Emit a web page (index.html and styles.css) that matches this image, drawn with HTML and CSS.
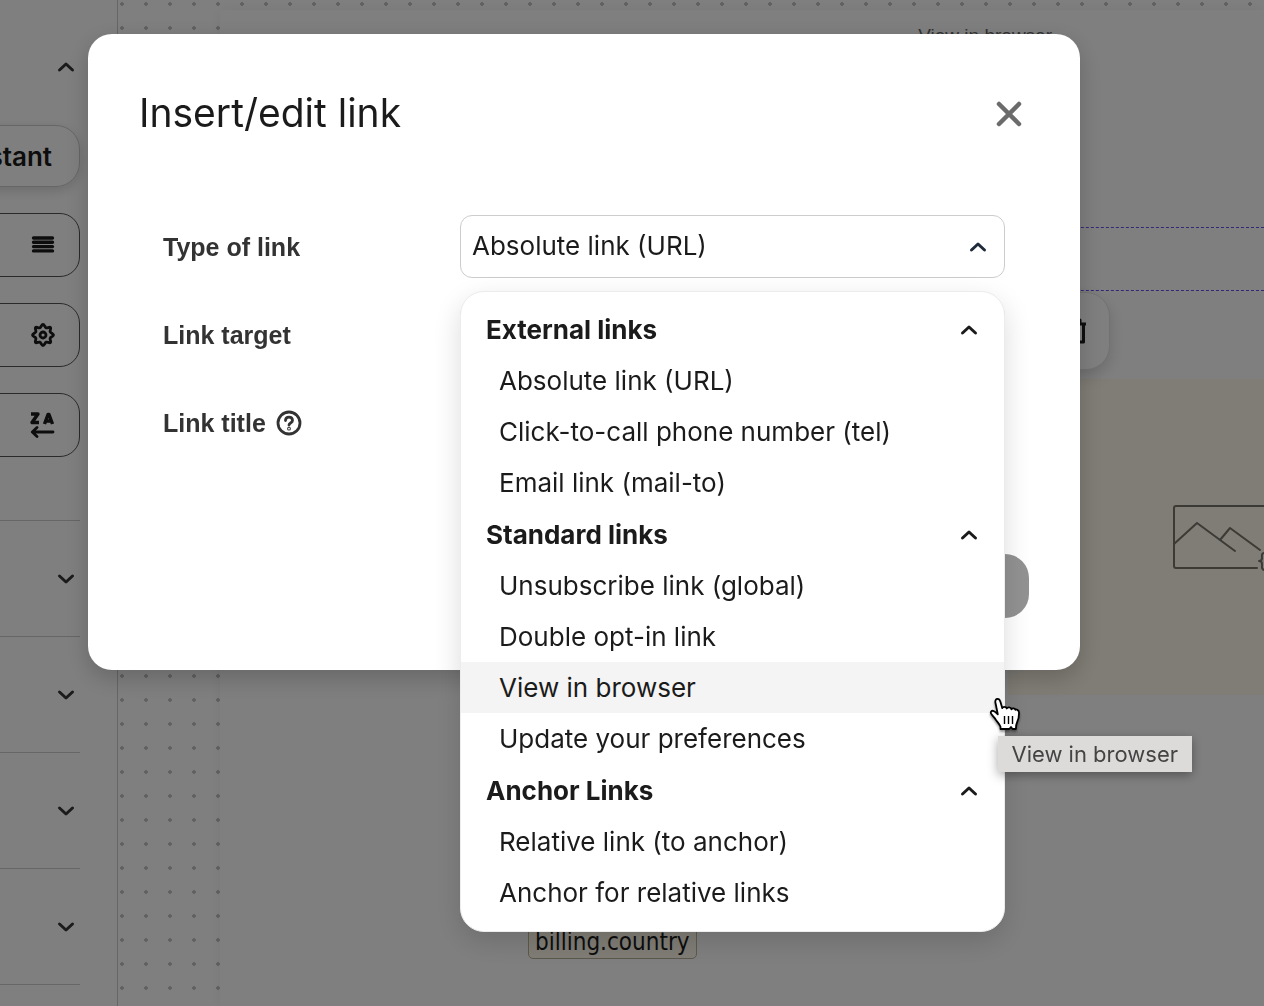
FILE: index.html
```
<!DOCTYPE html>
<html lang="en">
  <head>
    <meta charset="UTF-8" />
    <meta name="viewport" content="width=device-width, initial-scale=1.0" />
    <title>Insert/edit link</title>
    <link rel="stylesheet" href="styles.css">
  </head>
  <body>
    <svg class="sprite" aria-hidden="true">
      <symbol id="chevron" viewBox="0 0 18 12">
        <path d="M2.500 9 9 3l6.500 6" fill="none" stroke="currentColor" stroke-width="3" stroke-linecap="round" stroke-linejoin="round" />
      </symbol>
    </svg>

    <div class="editor">
      <aside class="sidebar">
        <button class="section-toggle" type="button" aria-label="Collapse section">
          <svg class="chevron"><use href="#chevron" /></svg>
        </button>
        <div class="tools">
          <button class="assistant" type="button">Assistant</button>
          <button class="tool" type="button" aria-label="Justify">
            <svg width="24" height="18" viewBox="0 0 24 18" stroke="currentColor" stroke-width="3.400" stroke-linecap="round">
              <path d="M2.500 2h19M2.500 6.300h19M2.500 10.600h19M2.500 14.900h19" />
            </svg>
          </button>
          <button class="tool" type="button" aria-label="Settings">
            <svg width="24" height="24" viewBox="0 0 24 24" fill="none" stroke="currentColor" stroke-width="2.800" stroke-linejoin="round">
              <path d="M12 1.500c1.500 0 1.900 2.900 3.200 3.400s3.300-1.400 4.300-.4-.9 3-.4 4.300 3.400 1.700 3.400 3.200-2.900 1.900-3.400 3.200 1.400 3.300.4 4.300-3-.9-4.300-.4-1.700 3.400-3.200 3.400-1.900-2.900-3.200-3.400-3.300 1.400-4.300.4.900-3 .4-4.300-3.400-1.700-3.400-3.200 2.900-1.900 3.400-3.200-1.400-3.300-.4-4.300 3 .9 4.300.4 1.700-3.400 3.200-3.400z" />
              <circle cx="12" cy="12" r="3" />
            </svg>
          </button>
          <button class="tool" type="button" aria-label="Text direction">
            <svg width="26" height="26" viewBox="0 0 26 26" fill="none" stroke="currentColor" stroke-width="3.400" stroke-linejoin="round">
              <path d="M2 2h7L3 10.500h7M15.500 12 19 2.500h1L23.500 12M17 9h5" />
              <path d="M24 20H3.500M8 15.500 3.300 20 8 24.500" stroke-width="2.800" stroke-linecap="round" />
            </svg>
          </button>
        </div>
        <button class="section" type="button" aria-label="Expand section"><svg class="chevron down"><use href="#chevron" /></svg></button>
        <button class="section" type="button" aria-label="Expand section"><svg class="chevron down"><use href="#chevron" /></svg></button>
        <button class="section" type="button" aria-label="Expand section"><svg class="chevron down"><use href="#chevron" /></svg></button>
        <button class="section" type="button" aria-label="Expand section"><svg class="chevron down"><use href="#chevron" /></svg></button>
        <div class="section-end"></div>
      </aside>

      <main class="canvas">
        <div class="sheet">
          <div class="preheader"><a href="#">View in browser</a></div>
          <div class="selected-row">
            <div class="row-toolbar">
              <button type="button" aria-label="Delete">
                <svg width="22" height="26" viewBox="0 0 22 26" fill="none" stroke="currentColor" stroke-width="3" stroke-linejoin="round">
                  <path d="M1 6h20M7 6V2h8v4M3.500 6v18h15V6" />
                </svg>
              </button>
            </div>
          </div>
          <div class="product">
            <div class="product-image">
              <svg width="120" height="72" viewBox="0 0 120 72" fill="none" stroke="currentColor" stroke-width="2" stroke-linecap="round" stroke-linejoin="round">
                <path d="M84 64H3a2 2 0 0 1-2-2V4a2 2 0 0 1 2-2h114M1 40l23-21 38 28M47 36l10-12 30 22" />
                <path d="M92 49c-4 0-3 3-3 5s-1 3-3 3c2 0 3 1 3 3s-1 6 3 6" />
              </svg>
            </div>
          </div>
          <div class="merge-line"><span class="merge-tag">billing.country</span></div>
        </div>
      </main>
    </div>

    <div class="backdrop">
      <section class="modal" role="dialog" aria-modal="true" aria-labelledby="modal-title">
        <header class="modal-header">
          <h1 id="modal-title">Insert/edit link</h1>
          <button class="close" type="button" aria-label="Close">
            <svg width="26" height="26" viewBox="0 0 26 26" stroke="currentColor" stroke-width="4.500" stroke-linecap="round">
              <path d="M3 3l20 20M23 3 3 23" />
            </svg>
          </button>
        </header>

        <form class="link-form">
          <label for="link-type">Type of link</label>
          <div class="field">
            <select id="link-type">
              <option>Absolute link (URL)</option>
            </select>
            <svg class="chevron field-chevron"><use href="#chevron" /></svg>

            <div class="menu">
              <button class="group" type="button">External links <svg class="chevron"><use href="#chevron" /></svg></button>
              <ul>
                <li><button type="button">Absolute link (URL)</button></li>
                <li><button type="button">Click-to-call phone number (tel)</button></li>
                <li><button type="button">Email link (mail-to)</button></li>
              </ul>
              <button class="group" type="button">Standard links <svg class="chevron"><use href="#chevron" /></svg></button>
              <ul>
                <li><button type="button">Unsubscribe link (global)</button></li>
                <li><button type="button">Double opt-in link</button></li>
                <li class="active">
                  <button type="button">View in browser</button>
                  <svg class="pointer" width="32" height="36" viewBox="0 0 32 36">
                    <path d="M11.500 32v-2.300c-.9-2.500-3.200-4.700-4.700-7-1.200-2-3.800-4.300-4.700-6-.8-1.700.3-3.200 2.100-2.900 1.800.4 3 1.900 4.600 3.500L6.600 6.500C6 4.400 6.300 2.400 8 2c1.800-.4 2.800 1 3.400 2.800l1.900 6.400c.3-1.700 3.800-2 4.500.3.700-1.600 4-1.700 4.600.8.800-1.400 3.400-1.200 4 .5.400-.6 3.500-.2 3.600 2.700.1 4.500-.4 6.800-1.800 9.500-1 2-1.300 4-1.300 7h-3.400l-1.500-2-1.700 2z" fill="#fff" stroke="#000" stroke-width="1.800" stroke-linejoin="round" />
                    <path d="M15.500 19v8M19.500 19v8M23.500 19v8" stroke="#000" stroke-width="1.400" />
                  </svg>
                  <span class="tooltip" role="tooltip">View in browser</span>
                </li>
                <li><button type="button">Update your preferences</button></li>
              </ul>
              <button class="group" type="button">Anchor Links <svg class="chevron"><use href="#chevron" /></svg></button>
              <ul>
                <li><button type="button">Relative link (to anchor)</button></li>
                <li><button type="button">Anchor for relative links</button></li>
              </ul>
            </div>
          </div>

          <label for="link-target">Link target</label>
          <input type="text" id="link-target">

          <label for="link-title">
            Link title
            <svg width="26" height="26" viewBox="0 0 26 26" fill="none" stroke="currentColor" stroke-width="2.800" stroke-linecap="round">
              <circle cx="13" cy="13" r="11" />
              <path d="M9.500 10.500c0-4.500 7-4.500 7 0 0 2.500-3.500 2.500-3.500 4.500" />
              <circle cx="13" cy="18.700" r=".5" />
            </svg>
          </label>
          <input type="text" id="link-title">
        </form>

        <footer class="modal-footer">
          <button class="save" type="button" aria-label="Save" disabled></button>
        </footer>
      </section>
    </div>
  </body>
</html>
```
FILE: styles.css
```
* {
  box-sizing: border-box;
}
body {
  margin: 0;
  height: 100vh;
  overflow: hidden;
  font-family: Inter, "Liberation Sans", sans-serif;
  font-size: 26px;
  color: #1b1b1b;
}
button {
  padding: 0;
  border: 0;
  background: none;
  font: inherit;
  color: inherit;
  cursor: pointer;
}
.sprite {
  display: none;
}
.chevron {
  display: block;
  width: 18px;
  height: 12px;
}
.chevron.down {
  transform: rotate(180deg);
}

/* editor behind the dialog */
.editor {
  display: flex;
  min-height: 100vh;
  background: #fff;
}
.sidebar {
  flex: none;
  display: flex;
  flex-direction: column;
  align-items: flex-end;
  width: 118px;
  padding-right: 37px;
  border-right: 1px solid #ccc;
  overflow: hidden;
}
.section-toggle {
  padding: 61px 5px 52px;
}
.section-toggle,
.section {
  color: #363636;
}
.tools {
  display: flex;
  flex-direction: column;
  align-items: flex-end;
  gap: 26px;
  margin-bottom: 63px;
}
.assistant {
  width: 240px;
  height: 62px;
  padding-right: 27px;
  border: 1px solid #ccc;
  border-radius: 24px;
  box-shadow: 0 4px 12px rgba(0, 0, 0, 0.15);
  font-weight: 600;
  text-align: right;
}
.tool {
  display: flex;
  align-items: center;
  justify-content: flex-end;
  width: 240px;
  height: 64px;
  padding-right: 24px;
  border: 1px solid #555;
  border-radius: 20px;
}
.section,
.section-end {
  flex: none;
  width: 240px;
  border-top: 1px solid #ccc;
}
.section {
  display: flex;
  align-items: center;
  justify-content: flex-end;
  height: 116px;
  padding-right: 5px;
}
.canvas {
  flex: 1;
  padding: 10px 0 0 102px;
  background: radial-gradient(circle, #c4c4c4 2px, transparent 2px) -8px -8px / 24px 24px;
}
.sheet {
  height: 100%;
  background: #fff;
  box-shadow: 0 0 12px rgba(0, 0, 0, 0.06);
}
.preheader {
  height: 217px;
  padding: 14px 212px 0 0;
  font: 19px/24px "Liberation Sans", Arial, sans-serif;
  text-align: right;
}
.preheader a {
  color: #666;
  text-decoration: none;
}
.selected-row {
  position: relative;
  height: 64px;
  border: 1px dashed #6450f0;
  border-width: 1px 0;
}
.row-toolbar {
  position: absolute;
  top: 64px;
  right: 154px;
  display: flex;
  align-items: center;
  justify-content: flex-end;
  width: 200px;
  height: 78px;
  padding-right: 22px;
  border: 1px solid #e4e4e4;
  border-radius: 24px;
  background: #fff;
  box-shadow: 0 6px 16px rgba(0, 0, 0, 0.16);
}
.row-toolbar svg {
  display: block;
}
.product {
  display: flex;
  justify-content: flex-end;
  margin-top: 88px;
}
.product-image {
  width: 256px;
  height: 316px;
  padding: 125px 0 0 165px;
  background: #fffaeb;
  color: #77746b;
  overflow: hidden;
}
.merge-line {
  padding: 230px 0 0 308px;
}
.merge-tag {
  display: inline-block;
  padding: 0 6px;
  border: 1px solid #bab49a;
  border-radius: 5px;
  background: #fffaeb;
  font: 24px/32px "DejaVu Sans Condensed", "Noto Sans", sans-serif;
}

/* dialog */
.backdrop {
  position: fixed;
  inset: 0;
  padding: 34px 184px 0 88px;
  background: rgba(0, 0, 0, 0.5);
}
.modal {
  padding: 52px 51px;
  border-radius: 24px;
  background: #fff;
  box-shadow: 0 8px 24px rgba(0, 0, 0, 0.2);
}
.modal-header {
  display: flex;
  align-items: center;
  justify-content: space-between;
  height: 56px;
  padding-right: 7px;
}
.modal-header h1 {
  margin: 0 0 4px;
  font-size: 39px;
  font-weight: 400;
}
.close {
  display: flex;
  color: #6b6b6b;
}
.link-form {
  display: grid;
  grid-template-columns: 297px 1fr;
  gap: 24px 0;
  padding: 73px 24px 0;
}
.link-form label {
  display: flex;
  align-items: center;
  gap: 10px;
  height: 64px;
  font: bold 25px "Liberation Sans", Arial, sans-serif;
  color: #333;
}
.field {
  position: relative;
}
.link-form select,
.link-form input {
  width: 100%;
  height: 63px;
  padding: 0 11px 2px;
  border: 1px solid #ccc;
  border-radius: 12px;
  background: #fff;
  font: inherit;
  color: inherit;
  appearance: none;
}
.field-chevron {
  position: absolute;
  top: 26px;
  right: 18px;
  color: #1f2a3a;
  pointer-events: none;
}
.modal-footer {
  display: flex;
  justify-content: flex-end;
  margin-top: 99px;
}
.save {
  width: 140px;
  height: 64px;
  border-radius: 24px;
  background: #929292;
}

/* link type menu */
.menu {
  position: absolute;
  top: 76px;
  left: 0;
  right: 0;
  z-index: 1;
  display: flex;
  flex-direction: column;
  gap: 1px;
  padding: 12px 0 13px;
  border: 1px solid #ececec;
  border-radius: 24px;
  background: #fff;
  box-shadow: 0 10px 28px rgba(0, 0, 0, 0.14);
}
.menu ul {
  margin: -1px 0 0;
  padding: 0;
  list-style: none;
}
.menu li {
  position: relative;
}
.menu button {
  display: block;
  width: 100%;
  height: 51px;
  padding: 0 38px;
  text-align: left;
}
.menu .group {
  display: flex;
  align-items: center;
  justify-content: space-between;
  padding: 0 26px 0 25px;
  font-weight: 700;
}
.menu .active {
  background: #f4f4f4;
}
.pointer {
  position: absolute;
  top: 35px;
  right: -17px;
  z-index: 1;
  filter: drop-shadow(0 2px 1px rgba(0, 0, 0, 0.4));
}
.tooltip {
  position: absolute;
  top: 74px;
  right: -188px;
  padding: 0 14px 0 13px;
  background: #dcdbd9;
  box-shadow: 0 3px 10px rgba(0, 0, 0, 0.35);
  font-size: 22px;
  line-height: 36px;
  color: #444;
  white-space: nowrap;
}
```
